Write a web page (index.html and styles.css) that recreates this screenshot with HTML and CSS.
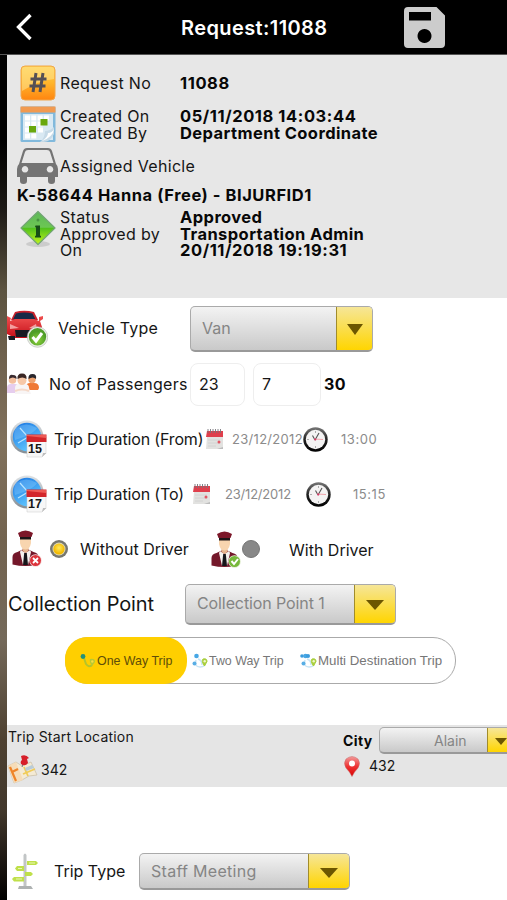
FILE: index.html
```html
<!DOCTYPE html>
<html lang="en">
<head>
<meta charset="utf-8">
<title>Request:11088</title>
<link rel="stylesheet" href="styles.css">
</head>
<body>
<svg class="defs" width="0" height="0" aria-hidden="true">
  <defs>
    <linearGradient id="orange" x2="0" y2="1"><stop stop-color="#ffd24d"/><stop offset=".5" stop-color="#ffb52c"/><stop offset="1" stop-color="#ff8510"/></linearGradient>
    <linearGradient id="green" x2="0" y2="1"><stop stop-color="#5fb85a"/><stop offset=".48" stop-color="#6cc653"/><stop offset=".5" stop-color="#4fc01c"/><stop offset="1" stop-color="#c4f51c"/></linearGradient>
    <linearGradient id="blue" x2=".6" y2="1"><stop stop-color="#1672e0"/><stop offset="1" stop-color="#62c8ff"/></linearGradient>
    <linearGradient id="steel" x2="0" y2="1"><stop stop-color="#dfe3e6"/><stop offset="1" stop-color="#858d94"/></linearGradient>
    <linearGradient id="rim" x2="0" y2="1"><stop stop-color="#777"/><stop offset=".5" stop-color="#222"/><stop offset="1" stop-color="#000"/></linearGradient>
    <linearGradient id="redcar" x2="0" y2="1"><stop stop-color="#f05050"/><stop offset="1" stop-color="#c40f19"/></linearGradient>
    <linearGradient id="pinred" x2="0" y2="1"><stop stop-color="#f29a9a"/><stop offset=".5" stop-color="#e33"/><stop offset="1" stop-color="#d90000"/></linearGradient>
    <radialGradient id="okball" cy=".7"><stop stop-color="#8fd43c"/><stop offset="1" stop-color="#4f9d28"/></radialGradient>
    <radialGradient id="sun" cy=".4"><stop stop-color="#ffe95c"/><stop offset="1" stop-color="#f2b800"/></radialGradient>
    <symbol id="tripclock" viewBox="0 0 37 38">
      <circle cx="17" cy="17" r="16.500" fill="url(#steel)"/><circle cx="17" cy="17" r="14.200" fill="url(#blue)"/>
      <path d="M6 8Q16 1 27 8Q24 14 5 20Q3 13 6 8" fill="#8fd0ff" opacity=".35"/>
      <path d="M10 8l8 9-10 6" fill="none" stroke="#b9e4ff" stroke-width="1.200"/>
      <path d="M17 17h19v16l-4 4H17z" fill="#f7f7f7" stroke="#c9c9c9" stroke-width=".5"/>
      <path d="M16.500 14.500h20V22h-20z" fill="#d3262b"/><path d="M17 15h19v3L17 16z" fill="#ee5a55"/>
      <path d="M32 37l1-4h3.500z" fill="#bdbdbd"/>
    </symbol>
    <symbol id="calendar" viewBox="0 0 19 22">
      <path d="M2 9h16v12H1z" fill="#e2e2e0"/><path d="M2 3h16v6H1z" fill="#df3f4c"/>
      <path d="M3 1v4M5.500 1v4M8 1v4M10.500 1v4M13 1v4M15.500 1v4" stroke="#77757b" stroke-width=".9"/>
      <path d="M3 12h12M3 15h12M3 18h8" stroke="#d0d0cf" stroke-width=".8"/>
      <circle cx="14" cy="14" r="1.500" fill="#e35663"/><path d="M12 21l6-2v2z" fill="#bcbcbc"/>
    </symbol>
    <symbol id="clock" viewBox="0 0 25 25">
      <circle cx="12.500" cy="12.500" r="12.200" fill="url(#rim)"/><circle cx="12.500" cy="12.500" r="9.700" fill="#f4f3f3"/>
      <path d="M12.500 4v2M12.500 19v2M4 12.500h2" stroke="#999" stroke-width=".8"/>
      <path d="M12 13L9.500 8.500M12 13l4-7" stroke="#555" stroke-width="1.100"/><path d="M11 12l9 .5" stroke="#ee8f98" stroke-width=".8"/>
      <circle cx="12.300" cy="12.500" r="1" fill="#d36"/>
    </symbol>
    <symbol id="driver" viewBox="0 0 30 38">
      <path d="M.5 34.500V27q0-4 5-5l5-2.500h6l5 2.500q5 1 5 5v7.500q-13 3-26 0" fill="#74182a"/>
      <path d="M9 20l4.500 3 4.500-3 1 2-3 13h-5L8 22z" fill="#f5f1ee"/><path d="M12.200 23h2.600l1.200 12h-5z" fill="#15151a"/>
      <path d="M10.500 16h6v5l-3 2-3-2z" fill="#e6b48d"/>
      <path d="M8 7h11v6q-1 6-5.500 6.500Q9 19 8 13z" fill="#f8d5af"/><path d="M8 6h11v3.500H8z" fill="#1c1517"/>
      <path d="M6 3q7.500-5 15 0l-1.500 4H7.500z" fill="#7c1729"/>
    </symbol>
    <symbol id="footprints" viewBox="0 0 16 16">
      <path d="M4 7Q2 14 8 14t5-5M6 6q4 1 4 6" fill="none" stroke="#c8e4f5" stroke-width="1.500"/>
      <circle cx="4.500" cy="3" r="2.300" fill="#46a7e5"/><circle cx="2.500" cy="10.500" r="2" fill="#58aee5"/>
      <path d="M11 6q4-1 4 2.500L12.500 13Q9 8 11 6" fill="#a9cf3d" stroke="#a9cf3d"/><circle cx="12.700" cy="8.300" r="1.200" fill="#eff7ca"/>
    </symbol>
  </defs>
</svg>

<header class="bar">
  <button class="back" aria-label="Back"><svg width="17" height="28" viewBox="0 0 17 28"><path d="M14.500 2L2.500 14l12 12" fill="none" stroke="#fff" stroke-width="3.300"/></svg></button>
  <h1>Request:11088</h1>
  <button class="save" aria-label="Save"><svg width="41" height="41" viewBox="0 0 41 41"><path fill="#ccc" fill-rule="evenodd" d="M4 0h28.500L41 8.500V37q0 4-4 4H4q-4 0-4-4V4q0-4 4-4M5 5v8.500h22V5zM20.500 22a7 7 0 1 0 .01 0"/></svg></button>
</header>

<main class="page">
  <section class="info">
    <div class="info-row number">
      <svg width="36" height="36" viewBox="0 0 36 36"><rect x="1" y="1" width="34" height="34" rx="4" fill="url(#orange)" stroke="#f1a64a"/><path d="M2 4q0-2 3-2h26q3 0 3 2v10Q20 15 2 26z" fill="#ffe391" opacity=".55"/><path d="M16 8l-3 19M23 8l-3 19M10.500 14h16M9.500 21h16" stroke="#555055" stroke-width="3"/></svg>
      <span>Request No</span><b class="digits">11088</b>
    </div>
    <div class="info-row created">
      <svg width="36" height="37" viewBox="0 0 36 37"><rect x=".5" y=".5" width="35" height="35.500" rx="1.500" fill="#81b9dc"/><path d="M.5.5h35v6H.5z" fill="#f19a50"/><path d="M3 8h30v26H3z" fill="#d9e9f3"/><path d="M5 9.500h5v5H5zm6.300 0h5v5h-5zm6.300 0h5v5h-5zm6.300 0h5v5h-5zM5 15.500h5v5H5zm6.300 0h5v5h-5zm6.300 0h5v5h-5zM5 21.500h5v5H5zm13 0h5v5h-5zM5 27.500h5v5H5zm6.300 0h5v5h-5z" fill="#fff"/><path d="M20.500 13h7v6.500h-7zM9 20h7v6.500H9z" fill="#69a80e"/><path d="M20 36q5-4 5-11 5 0 9-4v7q-3 7-10 8" fill="#c6dae7"/><path d="M22 35q6-4 6-8 4 0 6-4-1 8-12 12" fill="#fff"/></svg>
      <span>Created On<br>Created By</span><b><span class="digits">05/11/2018 14:03:44</span><br>Department Coordinate</b>
    </div>
    <div class="info-row vehicle">
      <svg width="41" height="36" viewBox="0 0 41 36"><path fill="#747474" fill-rule="evenodd" d="M10 0h21q3 0 4 3l4 13q2 2 2 5v8h-3v4q0 3-3.500 3T31 33v-4H10v4q0 3-3.500 3T3 33v-4H0v-8q0-3 2-5L6 3q1-3 4-3m1 2Q8.500 2 8 4L4.500 15h32L33 4q-.5-2-3-2zM8 18a3.300 3.300 0 1 0 .01 0M33 18a3.300 3.300 0 1 0 .01 0"/></svg>
      <span>Assigned Vehicle</span>
    </div>
    <b class="assigned">K-58644 Hanna (Free) - BIJURFID1</b>
    <div class="info-row status">
      <svg width="36" height="38" viewBox="0 0 36 38"><ellipse cx="18" cy="34" rx="12" ry="3" fill="#ccc"/><path d="M18 1.500L35 18 18 34.500 1 18z" fill="url(#green)" stroke="#72a574" stroke-width="1.200" stroke-linejoin="round"/><circle cx="18" cy="10" r="1.500" fill="#499342"/><path d="M15.500 15.500h4.500v10l1 .5v1.500h-6V26l1-.5v-8l-1-.5z" fill="#174d17"/></svg>
      <span>Status<br>Approved by<br>On</span><b>Approved<br>Transportation Admin<br><span class="digits">20/11/2018 19:19:31</span></b>
    </div>
  </section>

  <form class="form">
    <div class="row type-row">
      <svg width="41" height="38" viewBox="0 0 41 38"><path d="M8 2q9-2.500 19 0l4 8H4z" fill="#c8202b"/><path d="M9 3.500q8-2 16.500 0l3 6H6z" fill="#172a47"/><path d="M0 6l4 2-1 3 5-2h19l5 2v-4l4-1v3l-3 2 2 6v8l-8 3H8l-8-4z" fill="url(#redcar)"/><path d="M1 26h7v4H2zM8 20h17l-3 7H9z" fill="#181b23"/><path d="M3 14l9 4-9 1zM29 14l-7 4 8 1z" fill="#f4a0a0"/><circle cx="30.500" cy="27" r="10.300" fill="#e9eee6" stroke="#b5bbb3" stroke-width=".6"/><circle cx="30.500" cy="26.800" r="8.700" fill="url(#okball)"/><path d="M25.500 27l3.500 4 6-8" fill="none" stroke="#fff" stroke-width="3"/></svg>
      <label>Vehicle Type</label>
      <div class="select van"><span>Van</span><i></i></div>
    </div>

    <div class="row pass-row">
      <svg width="32" height="22" viewBox="0 0 32 22"><path d="M0 20v-5q0-4 4-4h4q4 0 4 4v5z" fill="#e6cdee"/><circle cx="5.500" cy="7" r="3.800" fill="#f4bf9f"/><path d="M2 6q0-5 4-4 4 0 3.500 4Q6 3 2 6" fill="#382a2e"/><path d="M19 17v-3q0-4 4-4h4q5 0 5 5l-1 2z" fill="#ef7936"/><circle cx="25" cy="6.500" r="3.700" fill="#efa36f"/><path d="M21.500 6q-.5-5 4-5t3.500 5q-3-3-7.500 0" fill="#29262c"/><path d="M8 21v-6q0-4 4-4h6q4 0 4 4l2 6z" fill="#f8f5f5"/><circle cx="15" cy="7.500" r="4.500" fill="#f7c8a7"/><path d="M10.500 6Q10 .5 15 .5T19.500 6q-4-3-9 0" fill="#3a2724"/><path d="M8 18q7-3 14 0" fill="none" stroke="#f5d9c9" stroke-width="2"/></svg>
      <label>No of Passengers</label>
      <span class="field">23</span><span class="field">7</span><b>30</b>
    </div>

    <div class="row from-row">
      <span class="stamp"><svg width="37" height="38"><use href="#tripclock"/></svg><em>15</em></span>
      <label>Trip Duration (From)</label>
      <svg width="19" height="22"><use href="#calendar"/></svg><span class="muted">23/12/2012</span>
      <svg width="25" height="25"><use href="#clock"/></svg><span class="muted time">13:00</span>
    </div>

    <div class="row to-row">
      <span class="stamp"><svg width="37" height="38"><use href="#tripclock"/></svg><em>17</em></span>
      <label>Trip Duration (To)</label>
      <svg width="19" height="22"><use href="#calendar"/></svg><span class="muted">23/12/2012</span>
      <svg width="25" height="25"><use href="#clock"/></svg><span class="muted time">15:15</span>
    </div>

    <div class="row driver-row">
      <svg width="30" height="38" viewBox="0 0 30 38"><use href="#driver" width="30" height="38"/><circle cx="23.500" cy="30.500" r="6.300" fill="#f5dada"/><circle cx="23.500" cy="30.500" r="5.500" fill="#dc343c"/><path d="M21 28l5 5m0-5l-5 5" stroke="#fff" stroke-width="1.800"/></svg>
      <svg width="18" height="18" viewBox="0 0 18 18"><circle cx="9" cy="9" r="9" fill="#77776f"/><circle cx="9" cy="9" r="6.500" fill="#ded9b5"/><circle cx="9" cy="9" r="5.600" fill="url(#sun)"/></svg>
      <label>Without Driver</label>
      <svg class="with-icon" width="30" height="38" viewBox="0 0 30 38"><use href="#driver" width="30" height="38"/><circle cx="23.500" cy="30.500" r="6.300" fill="#dfeccd"/><circle cx="23.500" cy="30.500" r="5.500" fill="#77b83b"/><path d="M20.500 30l2.500 3 4-5" fill="none" stroke="#fff" stroke-width="2"/></svg>
      <svg width="18" height="18" viewBox="0 0 18 18"><circle cx="9" cy="9" r="8.500" fill="#888" stroke="#767676"/></svg>
      <label class="with">With Driver</label>
    </div>

    <div class="row collect-row">
      <label>Collection Point</label>
      <div class="select point"><span>Collection Point 1</span><i></i></div>
    </div>

    <div class="tabs">
      <div class="tab on"><svg width="16" height="16" viewBox="0 0 16 16"><path d="M4 5l2 6q3 4 6 1" fill="none" stroke="#b5c42b" stroke-width="2"/><circle cx="3" cy="3.500" r="2.400" fill="#249179"/><path d="M10 6q5-1 5 3l-3 4q-3-4-2-7" fill="#b5c936"/><circle cx="12.300" cy="8.500" r="1.200" fill="#f7dc43"/></svg><span>One Way Trip</span></div>
      <div class="tab two"><svg width="16" height="16"><use href="#footprints"/></svg><span>Two Way Trip</span></div>
      <div class="tab multi"><svg width="17" height="16" viewBox="0 0 17 16"><use href="#footprints" x="1" width="16" height="16"/><circle cx="8" cy="3" r="2" fill="#3b9bdc"/><circle cx="2" cy="3" r="1.800" fill="#3b9bdc"/></svg><span>Multi Destination Trip</span></div>
    </div>

    <section class="place">
      <div class="start">
        <span>Trip Start Location</span>
        <div class="spot"><svg width="31" height="29" viewBox="0 0 31 29"><path d="M1 11l8-4 6 4 9-4 6 13-8 1-7 4-8 3z" fill="#f4ead4" stroke="#c9bba2" stroke-width=".7"/><path d="M1 11l8-4 7 18-9 3z" fill="#f6dcb8"/><path d="M3 12l6 14M5 17l6-3" stroke="#ef8428" stroke-width="2.200"/><path d="M16 19l12-5M17 12l4 9" stroke="#f0cb57" stroke-width="1.800"/><path d="M18 13l7-3 2 3-8 3z" fill="#b8ccd9"/><path d="M16.500 8L15 12" stroke="#777" stroke-width="1"/><path d="M14 1q5-2 8 2l-2 1 1 4q-3 4-7 1-1-3 1-4z" fill="#d71f2a"/></svg><span>342</span></div>
      </div>
      <div class="city">
        <div class="city-line"><b>City</b><div class="select alain"><span>Alain</span><i></i></div></div>
        <div class="spot pin"><svg width="16" height="21" viewBox="0 0 16 21"><path d="M8 20.500Q6 16 2 12-1 7 2 3q6-5 12 0 3 4 0 9-4 4-6 8.500" fill="url(#pinred)" stroke="#c96a6a" stroke-width=".5"/><circle cx="8" cy="7.500" r="3" fill="#fff"/></svg><span>432</span></div>
      </div>
    </section>

    <div class="row trip-row">
      <svg width="26" height="37" viewBox="0 0 26 37"><path d="M11.500 2q1.500-3 3 0v31h-3z" fill="#c2c5c6"/><path d="M7 33h12l2 3H6z" fill="#aeb2b2"/><path d="M15 8h9l2 2-2 2h-9zM12 13H5l-2 2.500L5 18h7zM13 19h6l2 2-2 2h-6zM12 24H2l-2 2 2 2.500h10z" fill="#bfe04a"/><path d="M17 10h6M4 26h6M6 15.500h4" stroke="#e9f6b5"/></svg>
      <label>Trip Type</label>
      <div class="select meeting"><span>Staff Meeting</span><i></i></div>
    </div>
  </form>
</main>
</body>
</html>
```
FILE: styles.css
```css
* { box-sizing: border-box; }
body {
  margin: 0;
  height: 900px;
  overflow: hidden;
  font: 16px/17px Inter, "Liberation Sans", sans-serif;
  color: #161616;
  background: linear-gradient(#000 0 140px, #1d1a16 210px, #5c5340 290px, #6d604c 350px, #81715c 440px, #72634f 540px, #74695a 640px, #4d4030 740px, #42382c 810px, #100d0a 880px, #000) left / 7px 100% no-repeat, #fff;
}
.defs { position: absolute; }
svg { display: block; flex: none; }
span, label, b, em { white-space: nowrap; }
b { font-weight: 700; color: #080808; }
button { border: 0; padding: 0; background: none; }

.bar { height: 55px; background: #000; border-bottom: 1px solid #555; display: grid; grid-template-columns: 181px 223px 1fr; align-items: center; }
.back { padding-left: 16px; }
.bar h1 { margin: 0; padding-top: 2px; color: #fff; font-size: 20px; font-weight: 600; line-height: 24px; letter-spacing: .4px; }

.page { margin-left: 7px; background: #fff; height: 845px; }
.info { height: 243px; background: #e7e7e7; padding: 9px 0 0 10px; letter-spacing: .33px; }
.info b { font-size: 16.5px; letter-spacing: .42px; }
.info b.digits, .digits { letter-spacing: .58px; }
.info-row { display: grid; grid-template-columns: 43px 120px 1fr; align-items: center; }
.info-row > svg { margin-left: 3px; }
.number { height: 38px; }
.created { height: 45px; }
.vehicle { height: 38px; }
.info .vehicle > svg { margin-left: 0; }
.info .assigned { display: block; height: 23px; line-height: 20px; letter-spacing: .55px; }
.status { height: 52px; line-height: 16.5px; }
.status > svg { margin-top: -11px; }

.row { display: grid; align-items: center; }
.type-row { height: 61px; grid-template-columns: 51px 132px auto; }
.type-row label, .pass-row label { letter-spacing: .25px; }
.pass-row { height: 50px; grid-template-columns: 42px 141px 63px 71px auto; }
.pass-row > b { letter-spacing: .4px; }
.field { height: 43px; border: 1px solid #eee; border-radius: 8px; padding: 0 8px; line-height: 41px; margin-right: 8px; }
.field + .field { margin-right: 3px; }
.from-row { height: 60px; grid-template-columns: 47px 151px 27px 71px 38px auto; }
.to-row { height: 50px; grid-template-columns: 47px 138px 33px 81px 47px auto; }
.from-row label, .to-row label { letter-spacing: -.16px; }
.stamp { position: relative; padding-left: 3px; }
.stamp em { position: absolute; left: 21px; top: 22px; font: 700 12.500px/14px "Liberation Sans", sans-serif; }
.muted { font-size: 13px; color: #8b8b8b; letter-spacing: .3px; }
.to-row .muted { letter-spacing: -.2px; }
.row .time { letter-spacing: .55px; }
.driver-row { height: 60px; grid-template-columns: 38px 30px 130px 32px 47px auto; padding-left: 5px; }
.with-icon { margin-top: 2px; margin-left: 1px; }
.with { padding-top: 3px; }

.select { display: flex; align-items: stretch; border: 1px solid #aaa; border-bottom: 2px solid #999; border-radius: 5px; background: linear-gradient(#f3f3f3, #c9c9c9); overflow: hidden; color: #858585; }
.select span { flex: 1; padding-left: 11px; align-self: center; }
.select i { flex: none; width: 36px; border-left: 1px solid #a18c2b; background: linear-gradient(#f6e698, #ffd500); display: grid; place-items: center; }
.select i::after { content: ""; border: 8px solid transparent; border-top: 11px solid #6c5600; border-bottom: 0; }
.van { width: 183px; height: 46px; }
.van i::after { margin-top: 3px; }
.point { width: 211px; height: 41px; letter-spacing: -.1px; }
.point i, .meeting i { width: 41px; }
.point i::after, .meeting i::after { border-width: 9px; border-top-width: 10px; border-bottom-width: 0; margin-top: 3px; }
.collect-row { height: 50px; grid-template-columns: 178px auto; }
.collect-row > label { font-size: 20px; line-height: 24px; padding-left: 1px; letter-spacing: -.14px; }

.tabs { display: flex; margin: 8px 0 0 58px; width: 391px; height: 47px; border: 1px solid #aaa; border-radius: 23px; font: 12.400px/16px "Liberation Sans", sans-serif; color: #777; }
.tab { display: flex; align-items: center; gap: 1px; }
.tab.on { width: 122px; margin: -1px 0 -1px -1px; padding-left: 15px; background: #ffcf00; border-radius: 22px; color: #5e4d09; }
.two { padding-left: 5px; width: 113px; }
.multi { font-size: 13.300px; }

.place { margin-top: 41px; height: 62px; background: #e5e5e5; display: grid; grid-template-columns: 336px 164px; font-size: 14px; }
.start { padding-top: 3px; }
.start > span { display: block; padding-left: 1px; letter-spacing: .2px; }
.spot { display: flex; align-items: center; gap: 3px; margin-top: 10px; }
.city { padding-top: 2px; }
.city-line { display: grid; grid-template-columns: 36px 164px; align-items: center; }
.city-line > b { letter-spacing: .4px; }
.alain { width: 150px; height: 27px; font-size: 14px; }
.alain span { padding-left: 54px; }
.alain i { width: 41px; justify-items: start; padding-left: 7px; }
.alain i::after { border-width: 6px; border-top-width: 7px; border-bottom-width: 0; margin-top: 2px; }
.pin { margin-top: 2px; gap: 9px; padding-left: 1px; }
.pin span { margin-top: -3px; }

.trip-row { margin-top: 66px; height: 37px; grid-template-columns: 42px 85px auto; padding-left: 5px; }
.meeting { width: 211px; height: 37px; letter-spacing: .3px; }
```
